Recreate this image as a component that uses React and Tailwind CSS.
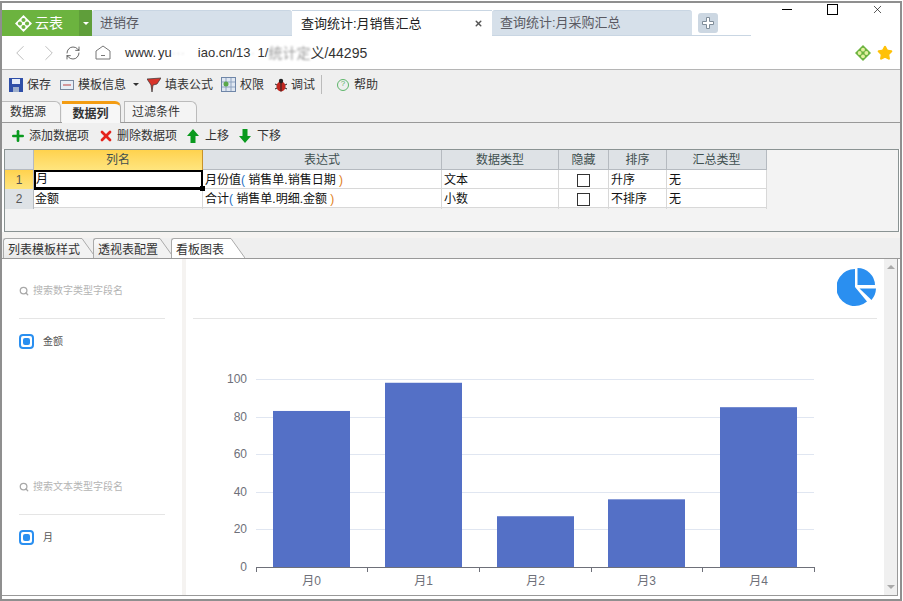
import React from 'react';
import { Plus, X, ChevronLeft, ChevronRight, RefreshCw, Search, Star } from 'lucide-react';

const cols = 'grid grid-cols-[29px_169px_239px_117px_50px_58px_100px] w-[762px]';

const rows = [
    { n: '1', name: '月', expr: '月份值', src: '销售单.销售日期', type: '文本', sort: '升序', active: true },
    { n: '2', name: '金额', expr: '合计', src: '销售单.明细.金额', type: '小数', sort: '不排序' },
];

const bars = [
    { label: '月0', x: 273, v: 83 },
    { label: '月1', x: 385, v: 98 },
    { label: '月2', x: 497, v: 27 },
    { label: '月3', x: 608, v: 36 },
    { label: '月4', x: 720, v: 85 },
];

function Logo({ size = 20, color = '#fff', hole = '#6cb33f' }) {
    return (
        <svg width={size} height={size} viewBox="0 0 20 20">
            <path d="M10 0 L20 10 L10 20 L0 10 Z" fill={color} />
            <circle cx="10" cy="5.8" r="2.4" fill={hole} />
            <circle cx="10" cy="14.2" r="2.4" fill={hole} />
            <circle cx="5.8" cy="10" r="2.4" fill={hole} />
            <circle cx="14.2" cy="10" r="2.4" fill={hole} />
        </svg>
    );
}

function BrowserTab({ label, className }) {
    return (
        <div className={`flex h-[26px] items-center rounded-t-[3px] border-t border-b border-[#c9d6e3] bg-[#d6e0ea] pl-2 text-[13px] text-[#5a5a62] ${className}`}>
            {label}
        </div>
    );
}

function ToolItem({ icon, label, className = '' }) {
    return (
        <div className={`flex items-center gap-1 ${className}`}>
            {icon}
            <span>{label}</span>
        </div>
    );
}

function MoveArrow({ down }) {
    return (
        <svg width="12" height="14" viewBox="0 0 12 14" className={down ? 'rotate-180' : ''}>
            <path d="M6 0 L12 7 L8.5 7 L8.5 14 L3.5 14 L3.5 7 L0 7 Z" fill="#0a9a1e" />
        </svg>
    );
}

function SlantTab({ label, active, className = '' }) {
    return (
        <div className={`flex h-[20px] items-stretch ${className}`}>
            <div className={`flex flex-1 items-center whitespace-nowrap rounded-tl-[3px] border-l border-t border-[#aaa] pl-[4px] pt-[2px] text-xs text-[#333] ${active ? 'bg-white' : 'bg-gradient-to-b from-[#fafafa] to-[#e9e9e9]'}`}>
                {label}
            </div>
            <svg width="16" height="20" viewBox="0 0 16 20" className="shrink-0">
                <path d="M0 0 L2 0 L16 20 L0 20 Z" fill={active ? '#fff' : '#f2f2f2'} />
                <path d="M0 0.5 L2 0.5 L16 20" fill="none" stroke="#aaa" />
            </svg>
        </div>
    );
}

function FieldBlock({ placeholder, label }) {
    return (
        <div className="h-[196px] px-[17px]">
            <div className="flex h-[60px] items-start gap-[4px] border-b border-[#e5e5e5] pt-[25px] text-[10px] leading-[14px] text-[#b4b4b4]">
                <Search size={10} strokeWidth={3} color="#a8a8a8" className="mt-[2px]" />
                {placeholder}
            </div>
            <div className="mt-[15px] flex items-center gap-[9px] text-[10px] text-[#555]">
                <div className="flex h-[15px] w-[15px] items-center justify-center rounded-[4px] border-2 border-[#2a8ff0]">
                    <div className="h-[7px] w-[7px] rounded-[2px] bg-[#2a8ff0]" />
                </div>
                {label}
            </div>
        </div>
    );
}

function Chart() {
    const gridY = [379, 417, 454, 492, 529];
    const labels = [
        { t: '100', y: 379 },
        { t: '80', y: 417 },
        { t: '60', y: 454 },
        { t: '40', y: 492 },
        { t: '20', y: 529 },
        { t: '0', y: 567 },
    ];
    return (
        <svg width="698" height="277" viewBox="186 319 698 277" className="block">
            {gridY.map((y) => (
                <line key={y} x1="256" x2="814" y1={y + 0.5} y2={y + 0.5} stroke="#e0e6f1" />
            ))}
            {bars.map((b) => {
                const h = b.v * 1.88;
                return <rect key={b.label} x={b.x} y={567 - h} width="77" height={h} fill="#5470c6" />;
            })}
            <line x1="256" x2="814" y1="567.5" y2="567.5" stroke="#6e7079" />
            {[256, 367, 479, 591, 702, 814].map((x) => (
                <line key={x} x1={x + 0.5} x2={x + 0.5} y1="567" y2="572" stroke="#6e7079" />
            ))}
            {labels.map((l) => (
                <text key={l.t} x="247" y={l.y + 4} textAnchor="end" fontSize="12" fill="#6e7079">
                    {l.t}
                </text>
            ))}
            {bars.map((b) => (
                <text key={b.label} x={b.x + 38.5} y="585" textAnchor="middle" fontSize="12" fill="#6e7079">
                    {b.label}
                </text>
            ))}
        </svg>
    );
}

export default function App() {
    return (
        <div className="relative flex h-[601px] w-[903px] flex-col overflow-hidden bg-white font-['Liberation_Sans','Noto_Sans_CJK_SC',sans-serif] text-xs text-[#333]">
            <div className="mr-px mt-px flex h-[600px] flex-col border-2 border-[#8f8f8f]">
                {/* browser tabs */}
                <div className="flex h-[33px] shrink-0 items-end">
                    <div className="flex h-[26px] w-[77px] items-center gap-[3px] bg-[#6cb33f] pl-[13px] text-sm text-white">
                        <Logo size={17} />
                        云表
                    </div>
                    <div className="flex h-[26px] w-[13px] items-center justify-center bg-[#5f9e3a]">
                        <div className="h-0 w-0 border-x-[3px] border-t-[3px] border-x-transparent border-t-white" />
                    </div>
                    <BrowserTab label="进销存" className="w-[200px]" />
                    <div className="flex h-[26px] w-[200px] items-center justify-between border-t border-[#c9d6e3] pl-[9px] pr-[9px] text-[13px] text-[#222]">
                        查询统计:月销售汇总
                        <X size={9} strokeWidth={4} color="#555" />
                    </div>
                    <BrowserTab label="查询统计:月采购汇总" className="w-[200px]" />
                    <div className="flex h-[26px] w-[59px] items-center border-b border-[#c9d6e3] pl-[6px]">
                        <div className="flex h-[20px] w-[20px] items-center justify-center rounded-[3px] bg-[#ccd7e2]">
                            <svg width="12" height="12" viewBox="0 0 12 12">
                                <path d="M4.5 0.5 H7.5 V4.5 H11.5 V7.5 H7.5 V11.5 H4.5 V7.5 H0.5 V4.5 H4.5 Z" fill="#fff" stroke="#7f8c99" />
                            </svg>
                        </div>
                    </div>
                </div>
                <div className="absolute right-[19px] top-[3px] flex items-center">
                    <div className="h-px w-[10px] bg-black" />
                    <div className="ml-[35px] h-[11px] w-[11px] border border-black" />
                    <X size={13} strokeWidth={1.2} color="#000" className="ml-[33px]" />
                </div>

                {/* address bar */}
                <div className="flex h-[34px] shrink-0 items-center border-b border-[#b5b5b5] text-[13px] text-[#333]">
                    <ChevronLeft size={26} strokeWidth={0.7} color="#aaa" className="ml-[5px]" />
                    <ChevronRight size={26} strokeWidth={0.7} color="#aaa" className="ml-[3px]" />
                    <RefreshCw size={16} strokeWidth={1.2} color="#444" className="ml-[3px]" />
                    <svg width="16" height="15" viewBox="0 0 16 15" className="ml-[14px]">
                        <path d="M1 6 L8 1 L15 6 L15 14 L1 14 Z" fill="none" stroke="#777" />
                        <path d="M6 10.5 H10" stroke="#777" />
                    </svg>
                    <div className="ml-[14px] flex flex-1 items-center">
                        www.
                        <span className="w-[2px]" />
                        yu
                        <span className="w-[26px] text-[#999] opacity-40 blur-[1px]">···</span>
                        iao.cn/13
                        <span className="w-[7px] text-[#999] opacity-40 blur-[1px]">·</span>
                        1/
                        <span className="text-sm opacity-50 blur-[1px]">统计定</span>
                        <span className="text-sm">义/44295</span>
                    </div>
                    <Logo size={16} color="#6cb33f" hole="#e4f0a0" />
                    <Star size={16} fill="#ffc107" color="#ffc107" className="ml-[6px] mr-[7px]" />
                </div>

                {/* toolbar */}
                <div className="flex h-[29px] shrink-0 items-center bg-[#efefef] pl-[7px]">
                    <ToolItem
                        label="保存"
                        icon={
                            <svg width="14" height="14" viewBox="0 0 14 14">
                                <rect width="14" height="14" fill="#2f4fa8" />
                                <rect x="3" y="1" width="8" height="5" fill="#e6edf8" />
                                <rect x="4" y="9" width="6" height="5" fill="#9fb0cc" />
                            </svg>
                        }
                    />
                    <ToolItem
                        className="ml-[9px]"
                        label="模板信息"
                        icon={
                            <svg width="14" height="10" viewBox="0 0 14 10">
                                <rect x="0.5" y="0.5" width="13" height="9" fill="#e8eef6" stroke="#7b8aa0" />
                                <path d="M3 5 H11" stroke="#c04040" />
                            </svg>
                        }
                    />
                    <div className="ml-[7px] h-0 w-0 border-x-[3px] border-t-[3px] border-x-transparent border-t-[#333]" />
                    <ToolItem
                        className="ml-[8px]"
                        label="填表公式"
                        icon={
                            <svg width="14" height="15" viewBox="0 0 14 15">
                                <path d="M0 2 L14 1 L10 7 L6 8 L5 15 L4 8 Z" fill="#d8342a" stroke="#333" strokeWidth="0.7" />
                            </svg>
                        }
                    />
                    <ToolItem
                        className="ml-[8px]"
                        label="权限"
                        icon={
                            <svg width="15" height="15" viewBox="0 0 15 15">
                                <rect x="0.5" y="0.5" width="14" height="14" fill="#dfe7f2" stroke="#6f86a8" />
                                <path d="M5 1 V14 M10 1 V14 M1 5 H14 M1 10 H14" stroke="#8fa3c0" />
                                <circle cx="5" cy="7" r="2.5" fill="#5aa84a" />
                            </svg>
                        }
                    />
                    <ToolItem
                        className="ml-[11px]"
                        label="调试"
                        icon={
                            <svg width="12" height="14" viewBox="0 0 12 14">
                                <ellipse cx="6" cy="8.5" rx="4.5" ry="5" fill="#c0261f" />
                                <circle cx="6" cy="3" r="2.2" fill="#222" />
                                <path d="M6 4 V13.5 M0 6 L2 7 M12 6 L10 7 M0 11 L2 10 M12 11 L10 10" stroke="#222" />
                            </svg>
                        }
                    />
                    <div className="ml-[6px] h-[19px] w-px bg-[#bbb]" />
                    <ToolItem
                        className="ml-[15px]"
                        label="帮助"
                        icon={
                            <div className="mr-[1px] flex h-[12px] w-[12px] items-center justify-center rounded-full border border-[#5db56a] text-[8px] text-[#5db56a]">
                                ?
                            </div>
                        }
                    />
                </div>

                {/* section tabs */}
                <div className="flex h-[24px] shrink-0 items-end gap-[1px] border-b border-[#999] bg-[#efefef]">
                    <div className="flex h-[21px] w-[59px] items-center justify-center rounded-tr-[6px] border-r border-t border-[#bbb] bg-[#f4f4f4] pr-[6px]">数据源</div>
                    <div className="-mb-px flex h-[22px] w-[59px] items-center justify-center rounded-tr-[6px] border-r border-t-[3px] border-[#aaa] border-t-[#f39c12] bg-[#f7f7f7] pr-px font-bold">数据列</div>
                    <div className="ml-[2px] flex h-[21px] w-[73px] items-center justify-center rounded-tr-[6px] border-l border-r border-t border-[#bbb] bg-[#f4f4f4] pr-[9px]">过滤条件</div>
                </div>

                {/* row actions */}
                <div className="flex h-[26px] shrink-0 items-center bg-[#efefef] pb-px pl-[8px]">
                    <Plus size={16} strokeWidth={4} color="#0a9a1e" />
                    <span className="ml-[3px]">添加数据项</span>
                    <X size={16} strokeWidth={4} color="#e5231b" className="ml-[9px]" />
                    <span className="ml-[3px]">删除数据项</span>
                    <span className="ml-[10px]"><MoveArrow /></span>
                    <span className="ml-[6px]">上移</span>
                    <span className="ml-[10px]"><MoveArrow down /></span>
                    <span className="ml-[6px]">下移</span>
                </div>

                {/* data grid */}
                <div className="relative ml-[2px] h-[83px] w-[895px] shrink-0 border border-[#8a9393] bg-[#f3f3f3]">
                    <div className={`${cols} h-[20px] border-b border-[#b5bac0] bg-[#dee2e6] text-center leading-[21px] text-[#3f4f4f]`}>
                        <div className="border-r border-[#b5bac0]" />
                        <div className="border-r border-[#c8922a] bg-gradient-to-b from-[#ffd24d] to-[#ffe680]">列名</div>
                        <div className="border-r border-[#b5bac0]">表达式</div>
                        <div className="border-r border-[#b5bac0]">数据类型</div>
                        <div className="border-r border-[#b5bac0]">隐藏</div>
                        <div className="border-r border-[#b5bac0]">排序</div>
                        <div className="border-r border-[#b5bac0]">汇总类型</div>
                    </div>
                    {rows.map((r) => (
                        <div key={r.n} className={`${cols} h-[19px] border-b border-[#d8d8d8] bg-white leading-[20px] text-[#111]`}>
                            <div className={`border-r border-[#b5bac0] text-center text-[#555] ${r.active ? 'bg-gradient-to-b from-[#ffd24d] to-[#ffe680]' : 'bg-[#dee2e6]'}`}>{r.n}</div>
                            <div className={r.active ? 'border-2 border-b-[3px] border-black leading-[15px]' : 'border-r border-[#d8d8d8] pl-px'}>{r.name}</div>
                            <div className="border-r border-[#d8d8d8] pl-[2px]">
                                {r.expr}<span className="text-[#1d6fc4]">(</span> {r.src}<span className="text-[#e08020]"> )</span>
                            </div>
                            <div className="border-r border-[#d8d8d8] pl-[2px]">{r.type}</div>
                            <div className="flex items-center justify-center border-r border-[#d8d8d8]">
                                <div className="h-[13px] w-[13px] border border-[#333]" />
                            </div>
                            <div className="border-r border-[#d8d8d8] pl-[2px]">{r.sort}</div>
                            <div className="border-r border-[#d8d8d8] pl-[2px]">无</div>
                        </div>
                    ))}
                    <div className="absolute left-[195px] top-[36px] h-[5px] w-[5px] bg-black" />
                </div>

                <div className="h-[6px] shrink-0 bg-[#f5f3f1]" />

                {/* lower tabs */}
                <div className="flex h-[21px] shrink-0 items-end border-b border-[#999] bg-[#efefef] pl-px">
                    <SlantTab label="列表模板样式" className="w-[92px]" />
                    <SlantTab label="透视表配置" className="-ml-[2px] w-[78px]" />
                    <SlantTab label="看板图表" active className="w-[74px]" />
                </div>

                {/* kanban panel */}
                <div className="mb-[3px] flex min-h-0 w-[896px] flex-1 border-b border-r border-[#999]">
                    <div className="w-[180px] shrink-0">
                        <FieldBlock placeholder="搜索数字类型字段名" label="金额" />
                        <FieldBlock placeholder="搜索文本类型字段名" label="月" />
                    </div>
                    <div className="w-[4px] shrink-0 bg-[#f5f3f1]" />
                    <div className="w-[698px] shrink-0">
                        <div className="mx-[7px] flex h-[60px] items-start justify-end border-b border-[#e5e5e5] pt-[9px]">
                            <svg width="40" height="39" viewBox="0 0 40 39">
                                <path d="M18 1 A18.5 18.5 0 1 0 30 33.5 L18 19 Z" fill="#2a8ff0" />
                                <path d="M20.5 0 A17.5 17.5 0 0 1 38 17 L20.5 17 Z" fill="#2a8ff0" />
                                <path d="M22.5 20.5 L39 20.5 A19 19 0 0 1 34.5 32 Z" fill="#2a8ff0" />
                            </svg>
                        </div>
                        <Chart />
                    </div>
                    <div className="flex w-[13px] shrink-0 flex-col items-center justify-between bg-[#f0f0f0] py-[6px]">
                        <div className="h-0 w-0 border-x-[4px] border-b-[4px] border-x-transparent border-b-[#aaa]" />
                        <div className="h-0 w-0 border-x-[4px] border-t-[4px] border-x-transparent border-t-[#aaa]" />
                    </div>
                </div>
            </div>
        </div>
    );
}
